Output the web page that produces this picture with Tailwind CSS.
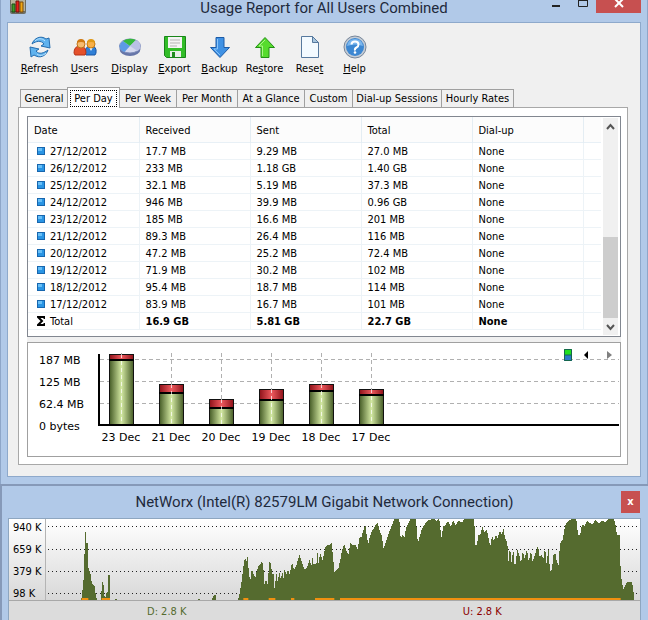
<!DOCTYPE html>
<html lang="en">
  <head>
    <meta charset="UTF-8" />
    <meta name="viewport" content="width=device-width, initial-scale=1.0" />
    <script src="https://cdn.jsdelivr.net/npm/@tailwindcss/browser@4"></script>
    <title>NetWorx Usage Report</title>
  </head>
  <body
    class="flex flex-col min-h-screen bg-[#b1c9e8] text-black text-[11px] leading-4 font-['DejaVu_Sans_Condensed','DejaVu_Sans',sans-serif]"
  >
    <!-- Usage report window -->
    <section class="px-[6px] pb-[7px] border-x border-[#8ea6c8]">
      <header class="relative flex items-start justify-center h-[22px]">
        <svg class="absolute left-[3px] top-0" width="16" height="15" viewBox="0 0 16 15">
          <path d="M0 0h16v12q0 2-2 2H2q-2 0-2-2z" fill="#6d6d64" />
          <path d="M1 0h14v11H1z" fill="#b5b39c" />
          <path d="M2 4h3v8H2z" fill="#3f9b28" stroke="#1c4d14" />
          <path d="M6 1h3v11H6z" fill="#e8201a" stroke="#70100c" />
          <path d="M10 2h3v10h-3z" fill="#f0a814" stroke="#7a4a08" />
        </svg>
        <h1 class="text-[15px] leading-4 text-[#1f2a3c] font-['Roboto',sans-serif]">
          Usage Report for All Users Combined
        </h1>
        <div class="absolute right-0 top-0 flex items-start">
          <button class="w-7 h-3" aria-label="Minimize">
            <svg width="28" height="12"><path d="M12 6h8" stroke="#222" stroke-width="2" /></svg>
          </button>
          <button class="w-7 h-3" aria-label="Maximize">
            <svg width="28" height="12"><path d="M10.500-2v8.500h9V-2M10 .500h10" fill="none" stroke="#222" /></svg>
          </button>
          <button class="w-[45px] h-[13px] bg-[#c75050]" aria-label="Close">
            <svg width="45" height="13"><path d="M19-1l8 8M27-1l-8 8" stroke="#fff" stroke-width="2" /></svg>
          </button>
        </div>
      </header>

      <div class="pl-[10px] pr-3 pt-3 pb-[11px] bg-[#f0f0f0] border border-[#8ea9cb]">
        <nav class="flex -ml-px">
          <button class="flex flex-col items-center w-[45px] h-[42px] gap-0.5">
            <svg width="24" height="24" viewBox="0 0 24 24" fill="#5fb2ee" stroke="#246cae">
              <path d="M4 9C6 3 13 0 18 4l3-1 1 10-9-2 3-2c-3-4-8-3-12 0z" />
              <path d="M20 15c-2 6-8 9-14 5l-3 2-1-10 9 2-3 2c3 4 8 2 12-1z" />
              <path d="M7 6c3-3 7-3 10 0M18 18c-3 3-7 3-9 1" fill="none" stroke="#b9e3ff" />
            </svg>
            <span><u>R</u>efresh</span>
          </button>
          <button class="flex flex-col items-center w-[45px] h-[42px] gap-0.5">
            <svg width="24" height="24" viewBox="0 0 24 24">
              <path d="M12 18q0-7 6-7t5 7l-1 2h-9z" fill="#2f7fd6" stroke="#1956a5" />
              <path d="M16 12l2 4 2-4z" fill="#fff" />
              <circle cx="18" cy="9" r="4" fill="#f7b04a" stroke="#c47a10" />
              <path d="M14 8q0-4 4-4t4 4q-4-2-8 0z" fill="#e09a1a" />
              <path d="M1 18q0-7 6-7t6 7l-1 2H2z" fill="#e4512b" stroke="#b73318" />
              <circle cx="8" cy="9" r="4" fill="#f7bc70" stroke="#bd7319" />
              <path d="M4 8q0-4 4-4t4 4q-4-2-8 0z" fill="#d07a14" />
            </svg>
            <span><u>U</u>sers</span>
          </button>
          <button class="flex flex-col items-center w-[45px] h-[42px] gap-0.5">
            <svg width="24" height="24" viewBox="0 0 24 24">
              <ellipse cx="12" cy="14" rx="10.500" ry="7" fill="#6675a8" />
              <ellipse cx="12" cy="11" rx="10.500" ry="7" fill="#d5d9ef" stroke="#7e8cb9" />
              <path d="M12 11L5 6Q2 8 1.500 11q0 4 5 6z" fill="#5c9ae4" />
              <path d="M12 11L5 6q6-4 13 -1z" fill="#35b83d" />
              <path d="M12 11l6-6q4 2 4.500 6 0 3-3 5z" fill="#b9c1e6" />
            </svg>
            <span><u>D</u>isplay</span>
          </button>
          <button class="flex flex-col items-center w-[45px] h-[42px] gap-0.5">
            <svg width="24" height="24" viewBox="0 0 24 24">
              <path d="M1.500 1.500h21v21h-19l-2-2z" fill="#32bd28" stroke="#19851a" />
              <path d="M5 2h14v11H5z" fill="#f4f4f4" />
              <path d="M7 5h10M7 8h10M7 11h7" stroke="#b5b5b5" />
              <path d="M7 16h11v6H7z" fill="#e9efe9" />
              <path d="M9 17h3v5H9z" fill="#218c20" />
            </svg>
            <span><u>E</u>xport</span>
          </button>
          <button class="flex flex-col items-center w-[45px] h-[42px] gap-0.5">
            <svg width="24" height="24" viewBox="0 0 24 24">
              <path d="M8 2.500h8v10h5.500L12 22.500 2.500 12.500H8z" fill="#3f91e4" stroke="#1c5ba7" />
              <path d="M9.500 4v10H6l6 6" fill="none" stroke="#8ac5fa" />
            </svg>
            <span><u>B</u>ackup</span>
          </button>
          <button class="flex flex-col items-center w-[45px] h-[42px] gap-0.5">
            <svg width="24" height="24" viewBox="0 0 24 24">
              <path d="M8 22.500h8v-10h5.500L12 2.500 2.500 12.500H8z" fill="#56dc2d" stroke="#238f17" />
              <path d="M9.500 21V11H6l6-6" fill="none" stroke="#a9f688" />
            </svg>
            <span>Re<u>s</u>tore</span>
          </button>
          <button class="flex flex-col items-center w-[45px] h-[42px] gap-0.5">
            <svg width="24" height="24" viewBox="0 0 24 24">
              <path d="M3.500 1.500h11l6 6v15h-17z" fill="#f3faff" stroke="#56799e" />
              <path d="M14.500 1.500v6h6z" fill="#a8c6df" stroke="#56799e" />
            </svg>
            <span>Rese<u>t</u></span>
          </button>
          <button class="flex flex-col items-center w-[45px] h-[42px] gap-0.5">
            <svg width="24" height="24" viewBox="0 0 24 24">
              <circle cx="12" cy="12" r="11" fill="#c4ccd5" stroke="#77869a" />
              <circle cx="12" cy="12" r="9" fill="#3c87d2" />
              <path d="M4 11q1-7 8-7t8 7q-8-3-16 0z" fill="#7bb6ed" />
              <path d="M8.500 9.500q0-3 3.500-3t3.500 3q0 2-2 3t-1.500 3" fill="none" stroke="#fff" stroke-width="2" />
              <circle cx="12" cy="17.500" r="1.300" fill="#fff" />
            </svg>
            <span><u>H</u>elp</span>
          </button>
        </nav>

        <div role="tablist" class="relative flex items-end h-[21px] mt-[10px] pl-0.5 -mb-px whitespace-nowrap">
          <button role="tab" class="w-[47px] h-[19px] border border-r-0 border-[#a0a0a0]">General</button>
          <button role="tab" aria-selected="true" class="w-[53px] h-[21px] p-0.5 pb-px bg-white border border-b-0 border-[#a0a0a0]">
            <span class="block h-[17px] leading-[15px] border border-dotted border-black">Per Day</span>
          </button>
          <button role="tab" class="w-[57px] h-[19px] border border-l-0 border-[#a0a0a0]">Per Week</button>
          <button role="tab" class="w-[61px] h-[19px] border border-l-0 border-[#a0a0a0]">Per Month</button>
          <button role="tab" class="w-[67px] h-[19px] border border-l-0 border-[#a0a0a0]">At a Glance</button>
          <button role="tab" class="w-12 h-[19px] border border-l-0 border-[#a0a0a0]">Custom</button>
          <button role="tab" class="w-[89px] h-[19px] border border-l-0 border-[#a0a0a0]">Dial-up Sessions</button>
          <button role="tab" class="w-[72px] h-[19px] border border-l-0 border-[#a0a0a0]">Hourly Rates</button>
        </div>

        <div class="pt-2 pb-[7px] pl-2 pr-[6px] bg-white border border-[#a8a8a8]">
          <div class="flex h-[221px] pr-0.5 bg-white border border-[#828790]">
            <div class="flex-1 overflow-hidden pr-[2px]">
              <table class="w-full text-left table-fixed border-collapse">
                <colgroup>
                  <col class="w-[111px]" />
                  <col class="w-[111px]" />
                  <col class="w-[111px]" />
                  <col class="w-[111px]" />
                  <col class="w-[111px]" />
                  <col />
                </colgroup>
                <thead>
                  <tr class="h-[25px] bg-[#fcfcfc] border-b border-[#e8f0f6]">
                    <th class="p-0 pt-[3px] pl-[6px] font-normal border-r border-[#e4edf3]">Date</th>
                    <th class="p-0 pt-[3px] pl-[6px] font-normal border-r border-[#e4edf3]">Received</th>
                    <th class="p-0 pt-[3px] pl-[6px] font-normal border-r border-[#e4edf3]">Sent</th>
                    <th class="p-0 pt-[3px] pl-[6px] font-normal border-r border-[#e4edf3]">Total</th>
                    <th class="p-0 pt-[3px] pl-[6px] font-normal border-r border-[#e4edf3]">Dial-up</th>
                    <td></td>
                  </tr>
                </thead>
                <tbody id="usageRows"></tbody>
              </table>
            </div>
            <div class="flex flex-col w-[15px] my-px bg-[#f0f0f0]">
              <button class="h-[17px]" aria-label="Scroll up">
                <svg width="15" height="17"><path d="M4 11l3.500-4 3.500 4" fill="none" stroke="#555" stroke-width="2" /></svg>
              </button>
              <div class="flex flex-col justify-end flex-1">
                <div class="h-[81px] bg-[#cdcdcd]"></div>
              </div>
              <button class="h-[17px]" aria-label="Scroll down">
                <svg width="15" height="17"><path d="M4 7l3.500 4L11 7" fill="none" stroke="#555" stroke-width="2" /></svg>
              </button>
            </div>
          </div>
          <div class="h-[5px] bg-[#f0f0f0]"></div>

          <!-- Daily bar chart -->
          <div class="relative h-[115px] pr-px bg-white border border-[#a0a0a0] font-['DejaVu_Sans',sans-serif]">
            <svg id="chart" class="block w-full h-full"></svg>
            <div class="absolute top-[6px] right-2 flex items-center">
              <svg width="8" height="12">
                <path d="M0 0h8v6H0z" fill="#20df20" />
                <path d="M0 6h8v6H0z" fill="#2b78c8" />
                <path d="M.500.500h7v11h-7zM0 6h8" fill="none" stroke="#15664c" />
              </svg>
              <button class="w-4 ml-[6px]" aria-label="Previous days">
                <svg class="mx-auto" width="4" height="8"><path d="M4 0v8L0 4z" /></svg>
              </button>
              <button class="w-4 ml-0.5" aria-label="Next days">
                <svg class="ml-auto" width="5" height="8"><path d="M0 0v8l5-4z" fill="#808080" /></svg>
              </button>
            </div>
          </div>
        </div>
      </div>
    </section>

    <!-- Live traffic window -->
    <section class="flex flex-col flex-1 pl-[6px] pr-[7px] border-t-2 border-l-2 border-[#8699b8]">
      <header class="relative flex items-center justify-center h-8">
        <h2 class="text-[15px] text-[#1f2a3c] font-['Roboto',sans-serif]">
          NetWorx (Intel(R) 82579LM Gigabit Network Connection)
        </h2>
        <button
          class="absolute right-px top-[5px] w-[19px] h-[22px] bg-[#c75050] text-white font-bold leading-5"
          aria-label="Close"
        >
          x
        </button>
      </header>
      <div class="flex flex-col flex-1 border-x border-t border-[#8ea6c0] bg-[#dcdcdc]">
        <div class="flex h-[82px] bg-linear-to-b from-white to-[#d8d8d8] border-b border-[#a8a8a8]">
          <div class="flex flex-col w-[37px] gap-[6px] pt-px pl-1 border-r border-[#b4b4b4] whitespace-nowrap">
            <span>940 K</span>
            <span>659 K</span>
            <span>379 K</span>
            <span>98 K</span>
          </div>
          <svg class="flex-1 min-w-0 h-[81px]" viewBox="0 0 1782 243" preserveAspectRatio="none">
            <path d="M6 22.500H1782M6 91.500H1782M6 157.500H1782M6 223.500H1782" stroke="#222" stroke-width="3" stroke-dasharray="3 9" />
            <g fill="#556b2f" shape-rendering="crispEdges">
              <path
                transform="translate(-138 -132)"
                d="M244 375l3-27 3-20 3-68 2-89h3v32h5v70l4 10 5 15 4 30 7 2 3 20 5 25M303 375l3-52 4-5 2 43 4 8 3-18 3 18 2-69h6v75M345 375l3-7 3 7M594 375l3-4 3 4M636 375l3-10 4-5h5v15z"
              />
              <path
                transform="translate(510 -132)"
                d="M66 375L72 350 78 310 82 275 87 247 91 260 95 243 99 300 103 318 107 283 112 295 118 310 122 288 127 275 132 270 138 257 142 275 145 330 150 313 155 328 160 262 165 265 168 300 172 290 176 345 181 293 185 320 190 290 194 312 199 293 203 310 206 281 211 300 216 283 221 297 228 262 234 285 240 275 245 255 251 239 257 260 262 275 267 285 273 278 281 252 286 275 289 245 293 270 297 263 301 270 304 230 308 270 312 230 316 245 320 255 325 230 330 212 340 210 347 205 351 245 355 290 361 287 367 280 373 255 378 225 385 207 390 225 397 240 403 205 410 212 418 210 425 222 430 190 437 185 442 165 448 150 453 190 457 205 463 180 470 165 478 152 485 142 490 165 497 180 503 222 508 205 515 185 522 165 530 145 535 132H550L554 190 560 180 565 188 570 160 577 145 583 132H600L603 180 606 205 611 185 618 160 625 150 633 138 648 132V375z"
              />
              <path
                transform="translate(1158 -132)"
                d="M0 375V132H8L12 138 22 132 25 160 29 190 33 155 40 150 48 138 57 155 63 136 70 150 80 138 90 142 97 132H127L129 212 135 210 139 180 145 178 152 155 156 172 165 165 170 190 175 215 180 182 186 198 192 178 197 190 203 168 210 180 214 158 219 190 226 202 229 262 234 212 238 264 244 222 247 268 252 268 255 222 262 240 267 265 272 230 278 250 285 222 290 260 297 226 302 262 306 245 312 232 318 210 323 245 328 240 335 250 339 213 344 270 349 218 354 288 360 285 364 240 370 235 375 262 380 270 384 205 392 195 398 160 402 145 410 138 420 132H433L438 180 445 178 450 148 458 152 465 138 480 148 490 136 500 145 510 136 520 142 530 132H545L550 145 555 180 563 180 566 290 570 325 575 345 580 330 586 322H600L604 345 607 375z"
              />
            </g>
            <path d="M107 240h20M167 240h25M592 240h15M668 240h20M735 240h10M807 240h58M882 240H1724" stroke="#f09010" stroke-width="6" />
          </svg>
        </div>
        <div class="grid grid-cols-2 pt-[3px] text-center">
          <span class="text-[#556b2f]">D: 2.8 K</span>
          <span class="text-[#8b0000]">U: 2.8 K</span>
        </div>
      </div>
    </section>

    <script>
      const usage = [
        ["27/12/2012", "17.7 MB", "9.29 MB", "27.0 MB"],
        ["26/12/2012", "233 MB", "1.18 GB", "1.40 GB"],
        ["25/12/2012", "32.1 MB", "5.19 MB", "37.3 MB"],
        ["24/12/2012", "946 MB", "39.9 MB", "0.96 GB"],
        ["23/12/2012", "185 MB", "16.6 MB", "201 MB"],
        ["21/12/2012", "89.3 MB", "26.4 MB", "116 MB"],
        ["20/12/2012", "47.2 MB", "25.2 MB", "72.4 MB"],
        ["19/12/2012", "71.9 MB", "30.2 MB", "102 MB"],
        ["18/12/2012", "95.4 MB", "18.7 MB", "114 MB"],
        ["17/12/2012", "83.9 MB", "16.7 MB", "101 MB"],
        ["Total", "16.9 GB", "5.81 GB", "22.7 GB"],
      ];

      const squareIcon = `<svg class="mt-[3px]" width="8" height="8"><path d="M0 0h8v8H0z" fill="#1766ae"/><path d="M1 1h6v6H1z" fill="#2a95e4"/><path d="M1 1h4v3H1z" fill="#68bff7"/></svg>`;
      const sumIcon = `<svg class="mt-0.5" width="8" height="10"><path d="M7.500 3V1H1l4 4-4 4h6.500V7" fill="none" stroke="#000" stroke-width="2"/></svg>`;

      document.getElementById("usageRows").innerHTML = usage
        .map(([date, ...values]) => {
          const isTotal = date === "Total";
          const cells = [...values, "None"]
            .map(
              (value) =>
                `<td class="p-0 pt-px pl-[6px] leading-[15px] border-r border-[#edf3f7] ${isTotal ? "font-bold" : ""}">${value}</td>`
            )
            .join("");
          return `<tr class="h-[17px] border-b border-[#edf3f7]">
            <td class="p-0 pt-px pl-[9px] leading-[15px] border-r border-[#edf3f7]"><div class="flex items-start gap-[5px]">${
              isTotal ? sumIcon : squareIcon
            }<span>${date}</span></div></td>${cells}<td></td></tr>`;
        })
        .join("");

      // top of the bar, and where sent meets received
      const bars = [
        ["23 Dec", 11, 17],
        ["21 Dec", 41, 50],
        ["20 Dec", 56, 65],
        ["19 Dec", 46, 57],
        ["18 Dec", 41, 48],
        ["17 Dec", 46, 52],
      ];
      const baseline = 82;

      let svg = `<defs>
        <linearGradient id="green"><stop stop-color="#465c27"/><stop offset=".5" stop-color="#d3e8a2"/><stop offset="1" stop-color="#465c27"/></linearGradient>
        <linearGradient id="red"><stop stop-color="#8e1119"/><stop offset=".5" stop-color="#ee5a5e"/><stop offset="1" stop-color="#8e1119"/></linearGradient>
      </defs>`;
      [
        ["187 MB", 16],
        ["125 MB", 38],
        ["62.4 MB", 60],
        ["0 bytes", 82],
      ].forEach(([label, y]) => {
        svg += `<text x="11" y="${y + 5}">${label}</text>`;
        if (y < baseline) {
          svg += `<line x1="72" x2="100%" y1="${y + 0.5}" y2="${y + 0.5}" stroke="#b0b0b0" stroke-dasharray="4 3"/>`;
        }
      });
      bars.forEach(([label, top, split], i) => {
        const x = 81 + i * 50;
        svg += `<rect x="${x + 0.5}" y="${split}" width="24" height="${baseline - split}" fill="url(#green)" stroke="#111"/>
          <rect x="${x + 0.5}" y="${top + 0.5}" width="24" height="${split - top}" fill="url(#red)" stroke="#111"/>
          <path d="M${x} ${split}h25" stroke="#000" stroke-width="2"/>
          <path d="M${x + 12.5} 10V${top}" stroke="#b0b0b0" stroke-dasharray="4 3"/>
          <path d="M${x + 12.5} ${top}V${baseline}" stroke="#fff" stroke-opacity=".7" stroke-dasharray="4 3"/>
          <text x="${x + 12}" y="98" text-anchor="middle">${label}</text>`;
      });
      svg += `<path d="M71 11v71" stroke="#000" stroke-width="2"/><line x1="70" x2="100%" y1="82" y2="82" stroke="#000" stroke-width="2"/>`;
      document.getElementById("chart").innerHTML = svg;
    </script>
  </body>
</html>
